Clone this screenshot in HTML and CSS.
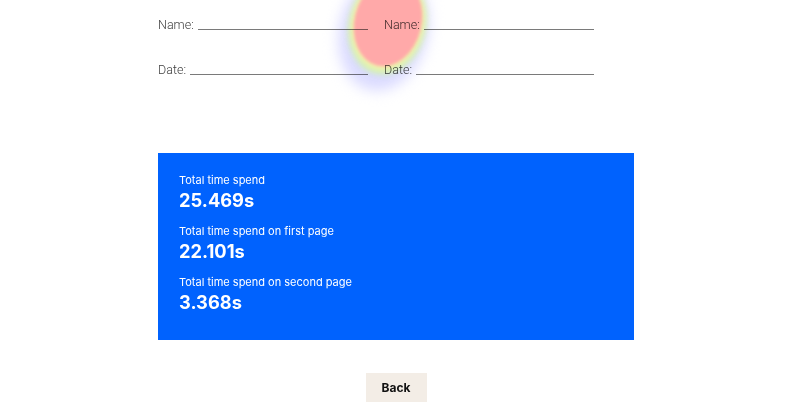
FILE: index.html
```html
<!DOCTYPE html>
<html>
<head>
<meta charset="utf-8">
<link rel="stylesheet" href="styles.css">
</head>
<body>
<div class="page">
  <div class="doc">
    <div class="row">
      <div class="field"><span class="lbl">Name:</span><span class="line"></span></div>
      <div class="field"><span class="lbl">Name:</span><span class="line"></span></div>
    </div>
    <div class="row row2">
      <div class="field"><span class="lbl">Date:</span><span class="line"></span></div>
      <div class="field"><span class="lbl">Date:</span><span class="line"></span></div>
    </div>
    <svg class="heat" width="140" height="160" viewBox="0 0 140 160">
      <defs>
        <filter id="b1" x="-50%" y="-50%" width="200%" height="200%"><feGaussianBlur stdDeviation="7"/></filter>
        <filter id="b2" x="-50%" y="-50%" width="200%" height="200%"><feGaussianBlur stdDeviation="3"/></filter>
        <filter id="b3" x="-50%" y="-50%" width="200%" height="200%"><feGaussianBlur stdDeviation="1.5"/></filter>
      </defs>
      <g transform="translate(70 62) rotate(14)">
        <ellipse cx="-2" cy="10" rx="44" ry="60" fill="#dadaff" filter="url(#b1)"/>
        <ellipse cx="0" cy="3" rx="38" ry="50" fill="#cdf2b4" filter="url(#b2)"/>
        <ellipse cx="0" cy="1" rx="36" ry="47.5" fill="#f6f2ac" filter="url(#b2)"/>
        <ellipse cx="0" cy="0" rx="33.5" ry="45" fill="#ffa9a9" filter="url(#b3)"/>
      </g>
    </svg>
  </div>
  <div class="stats">
    <div class="stat">
      <div class="stat-label">Total time spend</div>
      <div class="stat-value">25.469s</div>
    </div>
    <div class="stat">
      <div class="stat-label">Total time spend on first page</div>
      <div class="stat-value">22.101s</div>
    </div>
    <div class="stat">
      <div class="stat-label">Total time spend on second page</div>
      <div class="stat-value">3.368s</div>
    </div>
  </div>
  <div class="actions">
    <button class="back">Back</button>
  </div>
</div>
</body>
</html>
```
FILE: styles.css
```css
html, body {
  margin: 0;
  padding: 0;
  background: #ffffff;
  overflow: hidden;
}
.page {
  width: 476px;
  margin-left: 158px;
  font-family: Inter, "Liberation Sans", sans-serif;
}
.doc {
  position: relative;
  height: 153px;
}
.row {
  display: flex;
  gap: 16px;
  padding-top: 17px;
}
.row2 {
  padding-top: 29px;
}
.field {
  width: 210px;
  display: flex;
  align-items: baseline;
  font-family: Roboto, "Liberation Sans", Arial, sans-serif;
  font-weight: 300;
  font-size: 12.5px;
  line-height: 16px;
  color: #404040;
}
.lbl {
  margin-right: 4px;
}
.line {
  flex: 1;
  height: 1px;
  background: #7a7a7a;
  position: relative;
  top: 1px;
}
.heat {
  position: absolute;
  left: 160px;
  top: -40px;
  mix-blend-mode: multiply;
}
.stats {
  background: #0062fe;
  color: #ffffff;
  padding: 20px 21px 26px;
  display: flex;
  flex-direction: column;
  gap: 12px;
}
.stat-label {
  font-size: 11px;
  line-height: 15px;
}
.stat-value {
  font-size: 18.3px;
  line-height: 24px;
  font-weight: 700;
}
.actions {
  display: flex;
  justify-content: center;
  padding-top: 33px;
}
.back {
  width: 61px;
  height: 29px;
  border: none;
  background: #f3ede6;
  font-family: Inter, "Liberation Sans", sans-serif;
  font-weight: 700;
  font-size: 12px;
  color: #111;
  padding: 0;
}
```
